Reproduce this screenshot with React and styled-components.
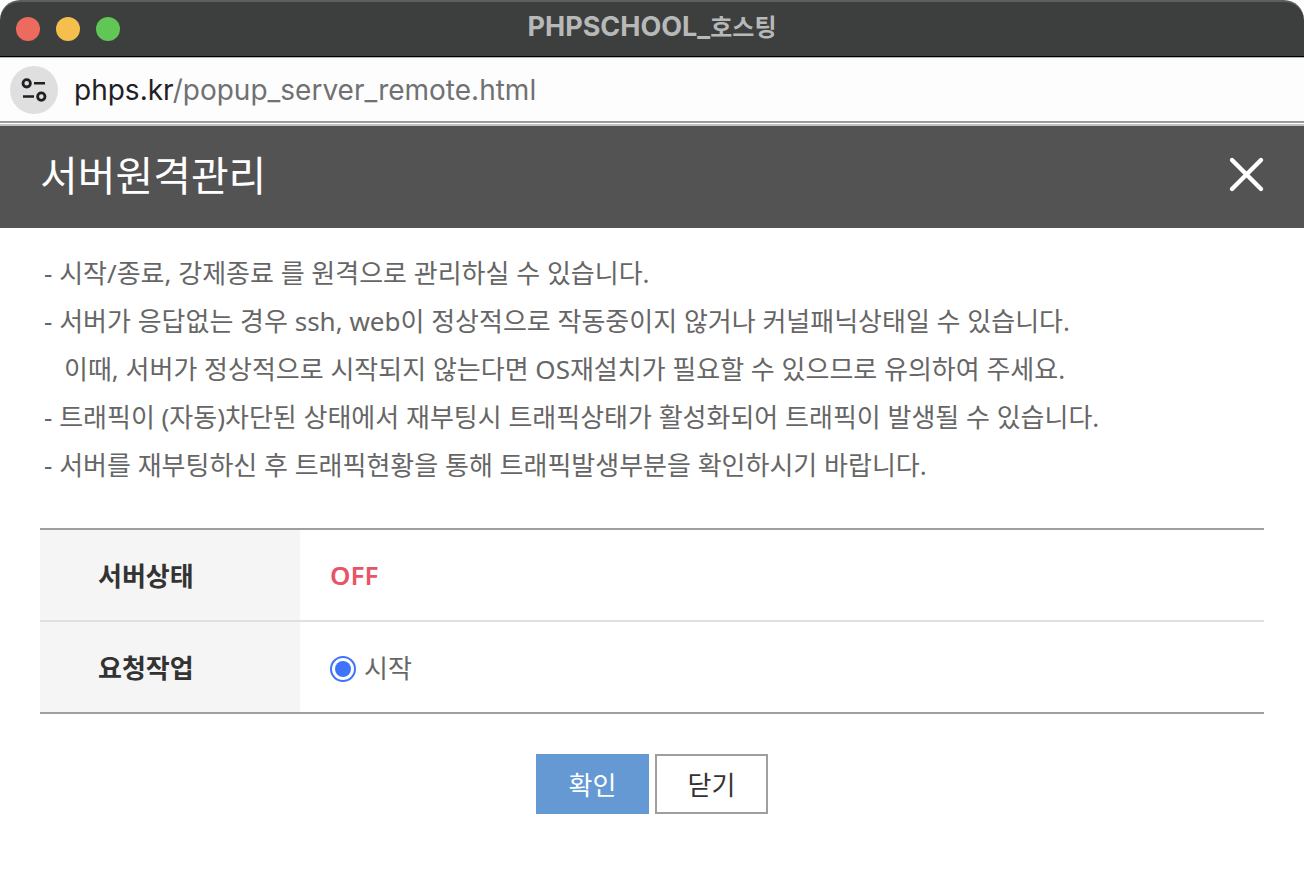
import React from "react";
import styled, { createGlobalStyle } from "styled-components";

const GlobalStyle = createGlobalStyle`
  * {
    box-sizing: border-box;
  }

  body {
    margin: 0;
    background: #ffffff;
    font-family: "Noto Sans", "Noto Sans CJK KR", sans-serif;
    font-size: 26px;
    color: #666666;
  }
`;

const Window = styled.div`
  display: flex;
  flex-direction: column;
`;

const TitleBar = styled.div`
  display: grid;
  grid-template-columns: 1fr auto 1fr;
  align-items: center;
  height: 57px;
  padding: 0 16px;
  border-top: 2px solid #5d5f5e;
  border-bottom: 1px solid #000000;
  border-radius: 20px 20px 0 0;
  background: #3d3f3e;
`;

const Lights = styled.div`
  display: flex;
  gap: 16px;
`;

const Light = styled.span`
  width: 24px;
  height: 24px;
  border-radius: 50%;
  background: ${(props) => props.$color};
`;

const WindowTitle = styled.div`
  padding-bottom: 4px;
  font-family: Inter, "Noto Sans CJK KR", sans-serif;
  font-size: 27px;
  line-height: 36px;
  font-weight: bold;
  color: #b7b9b8;
`;

const Korean = styled.span`
  font-size: 24px;
`;

const AddressBar = styled.div`
  display: flex;
  align-items: center;
  gap: 16px;
  height: 66px;
  padding: 0 10px;
  border-top: 1px solid #b5b5b5;
  border-bottom: 2px solid #9b999b;
  background: #fdfdfd;
`;

const SiteInfo = styled.button`
  display: flex;
  align-items: center;
  justify-content: center;
  width: 48px;
  height: 48px;
  padding: 0;
  border: none;
  border-radius: 50%;
  background: #dfdfdf;
`;

const Url = styled.div`
  font-family: Inter, sans-serif;
  font-size: 28px;
  line-height: 36px;
  color: #707173;
`;

const Host = styled.span`
  color: #1f2024;
`;

const Header = styled.header`
  display: flex;
  align-items: center;
  justify-content: space-between;
  height: 104px;
  margin-top: 1px;
  padding: 0 38px 4px 40px;
  border-top: 2px solid #c3c1c3;
  background: #535353;
`;

const Title = styled.h1`
  margin: 0;
  font-size: 41px;
  line-height: 56px;
  font-weight: normal;
  color: #ffffff;
`;

const CloseIcon = styled.button`
  display: flex;
  padding: 0;
  border: none;
  background: none;
`;

const Content = styled.main`
  padding: 21px 40px 40px;
`;

const Notes = styled.ul`
  margin: 0 0 39px;
  padding: 0 0 0 4px;
  list-style: none;
`;

const Note = styled.li`
  padding-left: ${(props) => (props.$indent ? "20px" : "0")};
  line-height: 48px;
`;

const StatusTable = styled.table`
  width: 100%;
  border-collapse: collapse;
  border-top: 2px solid #9f9f9f;
  border-bottom: 2px solid #9f9f9f;
`;

const Row = styled.tr`
  height: 92px;

  & + & {
    border-top: 2px solid #e0e0e0;
  }
`;

const HeadCell = styled.th`
  width: 260px;
  padding: 0 58px;
  background: #f5f5f5;
  text-align: left;
  font-weight: bold;
  color: #333333;
`;

const Cell = styled.td`
  padding: 0 30px;
`;

const Status = styled.strong`
  font-weight: 600;
  color: #e95464;
`;

const RadioLabel = styled.label`
  display: flex;
  align-items: center;
  gap: 8px;
`;

const Radio = styled.input`
  appearance: none;
  width: 26px;
  height: 26px;
  margin: 4px 0 0;
  border: 2px solid #3e74fb;
  border-radius: 50%;
  background: #ffffff;

  &:checked {
    padding: 3px;
    background: #3e74fb content-box;
  }
`;

const Buttons = styled.div`
  display: flex;
  justify-content: center;
  gap: 6px;
  margin-top: 40px;
`;

const Button = styled.button`
  width: 113px;
  height: 60px;
  padding: 0;
  border: 2px solid ${(props) => (props.$primary ? "#6499d3" : "#9f9f9f")};
  background: ${(props) => (props.$primary ? "#6499d3" : "#ffffff")};
  font-family: inherit;
  font-size: 26px;
  color: ${(props) => (props.$primary ? "#ffffff" : "#333333")};
  cursor: pointer;
`;

const App = () => {
  return (
    <Window>
      <GlobalStyle />
      <TitleBar>
        <Lights>
          <Light $color="#ed6b5e" />
          <Light $color="#f4bf4d" />
          <Light $color="#60c655" />
        </Lights>
        <WindowTitle>
          PHPSCHOOL_<Korean>호스팅</Korean>
        </WindowTitle>
      </TitleBar>

      <AddressBar>
        <SiteInfo type="button" aria-label="사이트 정보">
          <svg width="28" height="28" viewBox="0 0 28 28" fill="none" stroke="#1f2024">
            <circle cx="6.7" cy="7.3" r="3.7" strokeWidth="2.8" />
            <path d="M14 7.3h11M3 20.5h11" strokeWidth="2.6" />
            <circle cx="21.3" cy="20.6" r="3.7" strokeWidth="2.8" />
          </svg>
        </SiteInfo>
        <Url>
          <Host>phps.kr</Host>/popup_server_remote.html
        </Url>
      </AddressBar>

      <Header>
        <Title>서버원격관리</Title>
        <CloseIcon type="button" aria-label="창 닫기">
          <svg width="38" height="38" viewBox="0 0 38 38" stroke="#ffffff">
            <path d="M4 4l29 29M33 4L4 33" strokeWidth="4.4" strokeLinecap="round" />
          </svg>
        </CloseIcon>
      </Header>

      <Content>
        <Notes>
          <Note>- 시작/종료, 강제종료 를 원격으로 관리하실 수 있습니다.</Note>
          <Note>- 서버가 응답없는 경우 ssh, web이 정상적으로 작동중이지 않거나 커널패닉상태일 수 있습니다.</Note>
          <Note $indent>이때, 서버가 정상적으로 시작되지 않는다면 OS재설치가 필요할 수 있으므로 유의하여 주세요.</Note>
          <Note>- 트래픽이 (자동)차단된 상태에서 재부팅시 트래픽상태가 활성화되어 트래픽이 발생될 수 있습니다.</Note>
          <Note>- 서버를 재부팅하신 후 트래픽현황을 통해 트래픽발생부분을 확인하시기 바랍니다.</Note>
        </Notes>

        <StatusTable>
          <tbody>
            <Row>
              <HeadCell scope="row">서버상태</HeadCell>
              <Cell>
                <Status>OFF</Status>
              </Cell>
            </Row>
            <Row>
              <HeadCell scope="row">요청작업</HeadCell>
              <Cell>
                <RadioLabel htmlFor="start">
                  <Radio type="radio" name="work" id="start" defaultChecked />
                  시작
                </RadioLabel>
              </Cell>
            </Row>
          </tbody>
        </StatusTable>

        <Buttons>
          <Button type="submit" $primary>
            확인
          </Button>
          <Button type="button">닫기</Button>
        </Buttons>
      </Content>
    </Window>
  );
};

export default App;
